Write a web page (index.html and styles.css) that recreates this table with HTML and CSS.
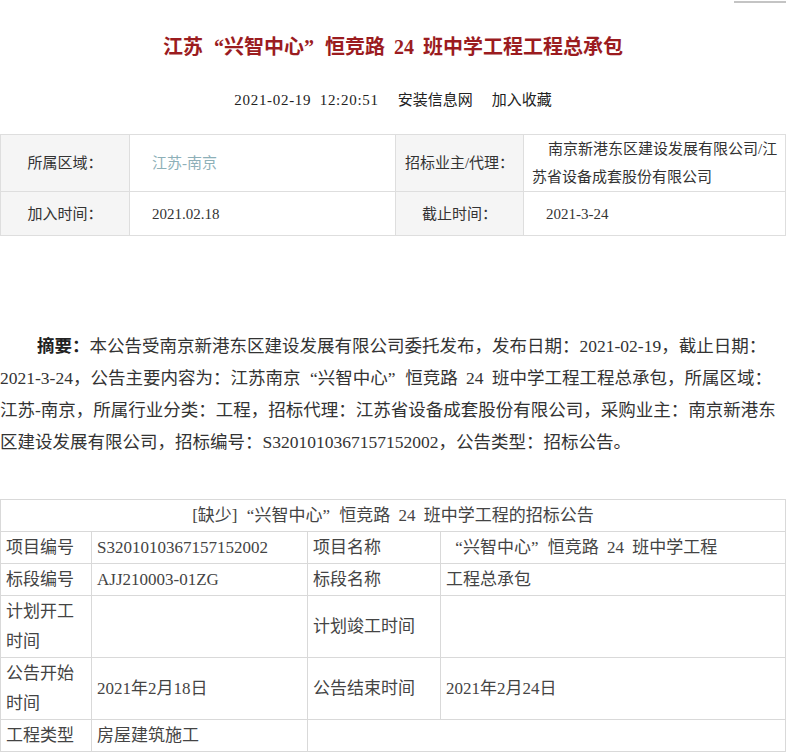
FILE: index.html
```html
<!DOCTYPE html>
<html lang="zh-CN">
<head>
  <meta charset="UTF-8" />
  <meta name="viewport" content="width=device-width, initial-scale=1.0"/>
  <title>江苏“兴智中心”恒竞路 24 班中学工程工程总承包</title>
  <link rel="stylesheet" href="styles.css">
</head>
<body>
  <div class="topbar"><span class="topbar-mark"></span></div>

  <!-- 标题 -->
  <h1 class="titulo">江苏<span class="qa">“</span>兴智中心<span class="qc">”</span>恒竞路 24 班中学工程工程总承包</h1>
  <div class="meta">
    <span class="fecha">2021-02-19 12:20:51</span>
    <span>安装信息网</span>
    <span>加入收藏</span>
  </div>

  <!-- 基本信息 -->
  <table class="info">
    <colgroup>
      <col class="c1"><col class="c2"><col class="c3"><col class="c4">
    </colgroup>
    <tr class="fila-alta">
      <td class="etiqueta">所属区域：</td>
      <td class="valor enlace">江苏-南京</td>
      <td class="etiqueta">招标业主/代理：</td>
      <td class="valor largo">南京新港东区建设发展有限公司/江苏省设备成套股份有限公司</td>
    </tr>
    <tr>
      <td class="etiqueta">加入时间：</td>
      <td class="valor">2021.02.18</td>
      <td class="etiqueta">截止时间：</td>
      <td class="valor">2021-3-24</td>
    </tr>
  </table>

  <!-- 摘要 -->
  <p class="resumen"><b>摘要：</b>本公告受南京新港东区建设发展有限公司委托发布，发布日期：2021-02-19，截止日期：2021-3-24，公告主要内容为：江苏南京<span class="qa">“</span>兴智中心<span class="qc">”</span>恒竞路 24 班中学工程工程总承包，所属区域：江苏-南京，所属行业分类：工程，招标代理：江苏省设备成套股份有限公司，采购业主：南京新港东区建设发展有限公司，招标编号：S3201010367157152002，公告类型：招标公告。</p>

  <!-- 招标公告 -->
  <table class="detalle">
    <colgroup>
      <col class="d1"><col class="d2"><col class="d3"><col class="d4">
    </colgroup>
    <tr>
      <td colspan="4" class="cabecera">[缺少]<span class="qa">“</span>兴智中心<span class="qc">”</span>恒竞路 24 班中学工程的招标公告</td>
    </tr>
    <tr>
      <td>项目编号</td>
      <td>S3201010367157152002</td>
      <td>项目名称</td>
      <td><span class="qa">“</span>兴智中心<span class="qc">”</span>恒竞路 24 班中学工程</td>
    </tr>
    <tr>
      <td>标段编号</td>
      <td>AJJ210003-01ZG</td>
      <td>标段名称</td>
      <td>工程总承包</td>
    </tr>
    <tr>
      <td>计划开工时间</td>
      <td></td>
      <td>计划竣工时间</td>
      <td></td>
    </tr>
    <tr>
      <td>公告开始时间</td>
      <td>2021年2月18日</td>
      <td>公告结束时间</td>
      <td>2021年2月24日</td>
    </tr>
    <tr>
      <td>工程类型</td>
      <td>房屋建筑施工</td>
      <td colspan="2"></td>
    </tr>
  </table>
</body>
</html>
```

FILE: styles.css
```css
html, body {
  margin: 0;
  padding: 0;
  background: #fff;
  color: #333;
  font-family: "Liberation Serif", "Noto Sans CJK SC", serif;
  word-spacing: 0.25em;
}

.topbar {
  height: 4px;
  display: flex;
  justify-content: flex-end;
}

.topbar-mark {
  width: 52px;
  height: 2px;
  margin-top: 1px;
  background: #c4c4c4;
}

/* comillas de ancho completo */
.qa { padding-left: 0.55em; }
.qc { padding-right: 0.55em; }

/* Cabecera */
.titulo {
  margin: 29px 0 0;
  font-size: 20px;
  line-height: 28px;
  font-weight: bold;
  color: #9b1c1f;
  text-align: center;
}

.meta {
  margin-top: 29px;
  display: flex;
  justify-content: center;
  gap: 19px;
  font-size: 15px;
  line-height: 20px;
  color: #222;
}

.fecha {
  letter-spacing: 0.7px;
}

/* Tabla de info */
.info {
  margin-top: 24px;
  width: 100%;
  border-collapse: collapse;
  table-layout: fixed;
  font-size: 15px;
}

.info td {
  border: 1px solid #dedede;
  height: 43px;
  padding: 0;
  line-height: 28px;
}

.info .c1 { width: 129px; }
.info .c2 { width: 266px; }
.info .c3 { width: 128px; }

.etiqueta {
  background: #f5f5f5;
  text-align: center;
  color: #333;
}

.valor {
  padding-left: 22px !important;
  color: #333;
}

.enlace {
  color: #8db0b8;
}

.valor.largo {
  padding: 0 0 0 8px !important;
  text-indent: 16px;
}

/* Resumen */
.resumen {
  margin: 94px 0 0;
  font-size: 17.5px;
  line-height: 32px;
  text-indent: 37px;
  color: #333;
}

.resumen b {
  color: #222;
}

/* Tabla detalle */
.detalle {
  margin-top: 41px;
  width: 100%;
  border-collapse: collapse;
  table-layout: fixed;
  font-size: 17px;
  color: #444;
}

.detalle td {
  border: 1px solid #d9d9d9;
  padding: 1px 5px 0;
  line-height: 30px;
  vertical-align: middle;
}

.detalle .d1 { width: 91px; }
.detalle .d2 { width: 216px; }
.detalle .d3 { width: 133px; }

.cabecera {
  text-align: center;
}
```
